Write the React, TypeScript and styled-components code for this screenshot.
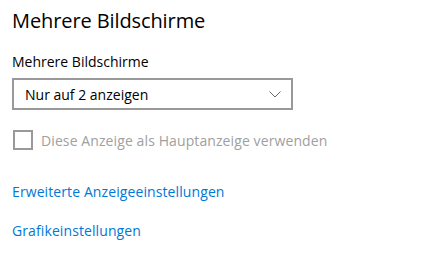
import React from "react";
import styled, { createGlobalStyle } from "styled-components";

const Global = createGlobalStyle`
  html, body { margin: 0; padding: 0; background: #fff; }
  body { font-family: "Open Sans", "Noto Sans", sans-serif; }
`;

const Page = styled.div`
  width: 432px;
  height: 270px;
  box-sizing: border-box;
  padding: 7px 0 0 12px;
  display: flex;
  flex-direction: column;
  background: #fff;
`;

const Title = styled.h1`
  margin: 0;
  font-weight: 400;
  font-size: 20px;
  line-height: 27px;
  color: #000;
  letter-spacing: -0.1px;
`;

const Label = styled.div`
  margin-top: 18px;
  font-size: 14px;
  line-height: 19px;
  color: #000;
`;

const Select = styled.div`
  margin-top: 7px;
  width: 281px;
  height: 32px;
  box-sizing: border-box;
  border: 2px solid #999;
  display: flex;
  align-items: center;
  justify-content: space-between;
  padding: 0 10px 0 11px;
  font-size: 14px;
  color: #000;
`;

const CheckRow = styled.div`
  margin-top: 20px;
  display: flex;
  align-items: center;
  gap: 8px;
  font-size: 14px;
  color: #a0a0a0;
  letter-spacing: 0.1px;
`;

const Box = styled.span`
  width: 20px;
  height: 20px;
  box-sizing: border-box;
  border: 2px solid #999;
  margin-left: 1px;
`;

const Link = styled.a<{ $gap: number }>`
  margin-top: ${(p) => p.$gap}px;
  font-size: 14px;
  line-height: 19px;
  color: #0078d7;
  text-decoration: none;
  align-self: flex-start;
  letter-spacing: 0.1px;
`;

export default function App() {
  return (
    <>
      <Global />
      <Page>
        <Title>Mehrere Bildschirme</Title>
        <Label>Mehrere Bildschirme</Label>
        <Select>
          <span>Nur auf 2 anzeigen</span>
          <svg width="12" height="7" viewBox="0 0 12 7">
            <path d="M0.5 0.5 L6 6 L11.5 0.5" fill="none" stroke="#666" strokeWidth="1" />
          </svg>
        </Select>
        <CheckRow>
          <Box />
          <span>Diese Anzeige als Hauptanzeige verwenden</span>
        </CheckRow>
        <Link $gap={32}>Erweiterte Anzeigeeinstellungen</Link>
        <Link $gap={20}>Grafikeinstellungen</Link>
      </Page>
    </>
  );
}
